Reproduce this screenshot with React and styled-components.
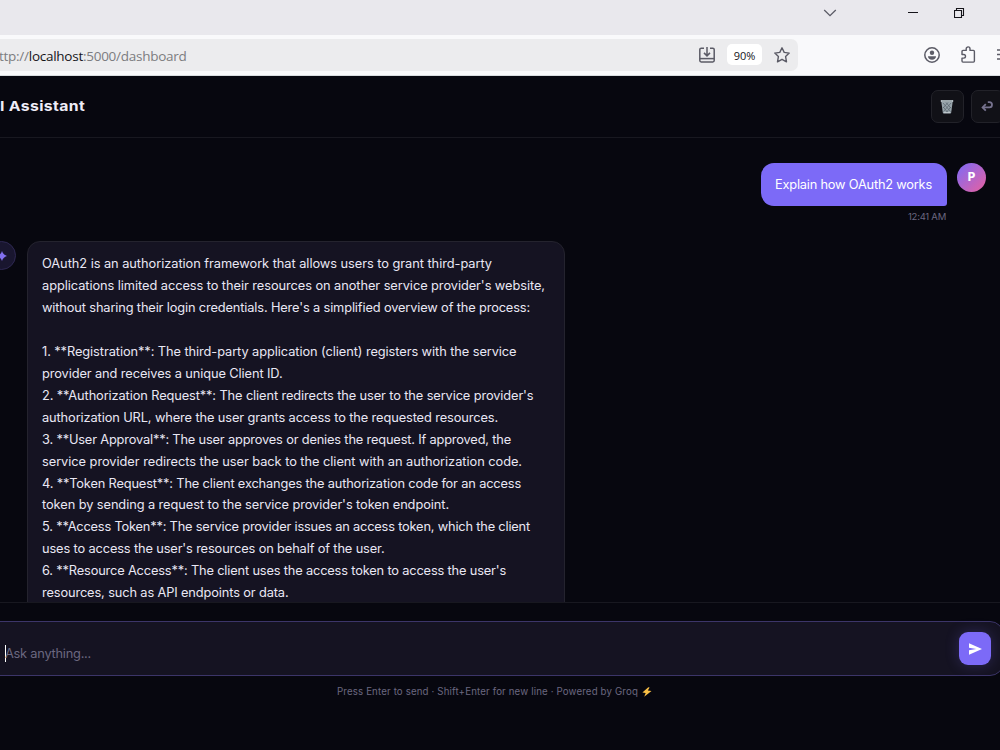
import React, { useLayoutEffect, useRef } from 'react';
import styled, { createGlobalStyle } from 'styled-components';

const FitText = ({ width, children, ...rest }) => {
  const ref = useRef(null);

  // spread the letters so the text takes exactly the wanted width
  useLayoutEffect(() => {
    const el = ref.current;
    el.style.letterSpacing = '0px';
    const natural = el.getBoundingClientRect().width;
    const gap = (width - natural) / el.textContent.length;
    el.style.letterSpacing = `${gap}px`;
  }, [width, children]);

  return (
    <Fitted ref={ref} {...rest}>
      {children}
    </Fitted>
  );
};

const answer = [
  ['OAuth2 is an authorization framework that allows users to grant third-party', 450],
  ["applications limited access to their resources on another service provider's website,", 503],
  ["without sharing their login credentials. Here's a simplified overview of the process:", 488],
  null,
  ['1. **Registration**: The third-party application (client) registers with the service', 474.5],
  ['provider and receives a unique Client ID.', 240.5],
  ["2. **Authorization Request**: The client redirects the user to the service provider's", 491.5],
  ['authorization URL, where the user grants access to the requested resources.', 456],
  ['3. **User Approval**: The user approves or denies the request. If approved, the', 469],
  ['service provider redirects the user back to the client with an authorization code.', 480],
  ['4. **Token Request**: The client exchanges the authorization code for an access', 479],
  ["token by sending a request to the service provider's token endpoint.", 407],
  ['5. **Access Token**: The service provider issues an access token, which the client', 488],
  ["uses to access the user's resources on behalf of the user.", 342.5],
  ["6. **Resource Access**: The client uses the access token to access the user's", 464],
  ['resources, such as API endpoints or data.', 246.5],
];

const ChevronIcon = () => (
  <svg width="14" height="8" viewBox="0 0 14 8" fill="none" stroke="#5b5b66" strokeWidth="1.3">
    <path d="M1.2 1l5.8 5.6L12.8 1" />
  </svg>
);

const MinimizeIcon = () => (
  <svg width="10" height="10" viewBox="0 0 10 10">
    <path d="M0 4.5h10" stroke="#15141a" />
  </svg>
);

const RestoreIcon = () => (
  <svg width="11" height="11" viewBox="0 0 11 11" fill="none" stroke="#15141a" strokeWidth="1.1">
    <path d="M.5 2.500h7v7h-7z" />
    <path d="M2.500 2.500v-2h7v7h-2" />
  </svg>
);

const InstallIcon = () => (
  <svg width="16" height="16" viewBox="0 0 16 16" fill="none" stroke="#5b5b66" strokeWidth="1.5">
    <path d="M5 1.2H2.2C1.5 1.2.8 1.8.8 2.5v11c0 .9.6 1.4 1.4 1.4h11.600c.8 0 1.400-.5 1.400-1.400v-11c0-.7-.7-1.300-1.400-1.300H11" />
    <path d="M.8 11.600h14.400" />
    <path d="M8 0v8.600M5 5.900l3 3 3-3" />
  </svg>
);

const StarIcon = () => (
  <svg width="16" height="16" viewBox="0 0 16 16" fill="none" stroke="#5b5b66" strokeWidth="1.4" strokeLinejoin="round">
    <path d="M8 .8l2.200 4.600 5 .7-3.600 3.500.9 5.200L8 12.300l-4.500 2.500.9-5.200L.8 6.100l5-.7z" />
  </svg>
);

const AccountIcon = () => (
  <svg width="16" height="16" viewBox="0 0 16 16">
    <circle cx="8" cy="8" r="7.2" fill="none" stroke="#5b5b66" strokeWidth="1.5" />
    <circle cx="8" cy="5.7" r="2.2" fill="#5b5b66" />
    <path d="M4 9.300h8c0 2.200-1.700 3.500-4 3.500s-4-1.300-4-3.500z" fill="#5b5b66" />
  </svg>
);

const PuzzleIcon = () => (
  <svg width="15" height="17" viewBox="0 0 15 17" fill="none" stroke="#5b5b66" strokeWidth="1.4" strokeLinejoin="round">
    <path d="M5.200 4.400V2.800a1.900 1.900 0 0 1 3.800 0v1.600h3.400c.6 0 1 .4 1 1v9.700c0 .6-.4 1-1 1H2c-.6 0-1-.4-1-1v-3h1.700a1.800 1.800 0 0 0 0-3.600H1V5.400c0-.6.4-1 1-1z" />
  </svg>
);

const MenuIcon = () => (
  <svg width="14" height="12" viewBox="0 0 14 12" stroke="#5b5b66" strokeWidth="1.3">
    <path d="M0 1h14M0 5.500h14M0 10h14" />
  </svg>
);

const TrashIcon = () => (
  <svg width="14" height="15" viewBox="0 0 14 15">
    <path d="M1.300 2.500h11.400l-1.500 11c-.1.700-.6 1-1.200 1H4c-.6 0-1.100-.3-1.200-1z" fill="#98a4ab" />
    <path d="M3 4l7.500 8.500M6 3.500l5 5.800M3.300 8l4.700 6M11 4l-7.500 8.500M8 3.500L3 9M10.700 8L6 14" stroke="#56626b" strokeWidth=".7" />
    <path d="M3.800 13.600h6.400" stroke="#c3ccd0" strokeWidth="1" />
    <rect x=".6" y=".9" width="12.8" height="2.1" rx="1" fill="#b9c3c8" />
    <path d="M2 2h10" stroke="#5d686f" strokeWidth=".6" />
  </svg>
);

const ReturnIcon = () => (
  <svg width="12" height="11" viewBox="0 0 12 11" fill="none" stroke="#77738f" strokeWidth="1.8">
    <path d="M6.800 1.200h1.600a2.600 2.600 0 0 1 0 5.200H1.800" />
    <path d="M4.800 3.200L1.600 6.400l3.200 3.200" />
  </svg>
);

const SparkIcon = () => (
  <svg width="10" height="10" viewBox="0 0 10 10" fill="#8270ee">
    <path d="M5 0c.8 2.600 2.200 4 5 5-2.800 1-4.200 2.400-5 5-.8-2.600-2.200-4-5-5 2.800-1 4.200-2.400 5-5z" />
  </svg>
);

const SendIcon = () => (
  <svg width="13" height="12" viewBox="0 0 13 12" fill="#fff">
    <path d="M0 .3L13 6 0 11.700V7.300L7.300 6 0 4.700z" />
  </svg>
);

const BoltIcon = () => (
  <svg width="10" height="10" viewBox="0 0 10 10">
    <path d="M6.300.2L.4 5.500l3.300.6L2.200 9.800l7.300-5.700-3.700-.6L7.600.4z" fill="#f9bf45" />
  </svg>
);

export default function App() {
  return (
    <Page>
      <GlobalStyle />
      <TabStrip>
        <ChevronIcon />
        <WindowButtons>
          <MinimizeIcon />
          <RestoreIcon />
        </WindowButtons>
      </TabStrip>
      <Toolbar>
        <AddressBar>
          <Url width={187.5}>
            ttp://<b>localhost</b>:5000/dashboard
          </Url>
          <AddressActions>
            <InstallIcon />
            <Zoom>
              <FitText width={21.5}>90%</FitText>
            </Zoom>
            <StarIcon />
          </AddressActions>
        </AddressBar>
        <BrowserActions>
          <AccountIcon />
          <PuzzleIcon />
          <MenuIcon />
        </BrowserActions>
      </Toolbar>
      <Header>
        <Title width={84.5}>I Assistant</Title>
        <HeaderActions>
          <IconButton>
            <TrashIcon />
          </IconButton>
          <IconButton>
            <ReturnIcon />
          </IconButton>
        </HeaderActions>
      </Header>
      <Chat>
        <UserRow>
          <UserMessage>
            <UserBubble>
              <FitText width={157}>Explain how OAuth2 works</FitText>
            </UserBubble>
            <Time>
              <FitText width={38}>12:41 AM</FitText>
            </Time>
          </UserMessage>
          <UserAvatar>P</UserAvatar>
        </UserRow>
        <BotRow>
          <BotAvatar>
            <SparkIcon />
          </BotAvatar>
          <BotBubble>
            {answer.map((line, i) => (
              <Line key={i}>{line && <FitText width={line[1]}>{line[0]}</FitText>}</Line>
            ))}
          </BotBubble>
        </BotRow>
      </Chat>
      <Composer>
        <InputBox>
          <Placeholder>
            <Caret />
            <FitText width={86}>Ask anything...</FitText>
          </Placeholder>
          <SendButton>
            <SendIcon />
          </SendButton>
        </InputBox>
        <Hint>
          <FitText width={301}>
            Press Enter to send · Shift+Enter for new line · Powered by Groq
          </FitText>
          <BoltIcon />
        </Hint>
      </Composer>
    </Page>
  );
}

const GlobalStyle = createGlobalStyle`
  * {
    box-sizing: border-box;
  }
  body {
    margin: 0;
    overflow: hidden;
    background: #07070f;
  }
  svg {
    display: block;
    flex: none;
  }
`;

const Fitted = styled.span`
  display: inline-block;
  white-space: nowrap;
`;

const Page = styled.div`
  display: flex;
  flex-direction: column;
  width: 1000px;
  height: 750px;
  overflow: hidden;
  background: #07070f;
  color: #e9e7f4;
  font-family: Inter, 'Liberation Sans', sans-serif;
`;

const TabStrip = styled.div`
  display: flex;
  flex: none;
  align-items: center;
  justify-content: flex-end;
  gap: 71px;
  height: 35px;
  padding: 0 35px 9px 0;
  background: #e9e8ed;
`;

const WindowButtons = styled.div`
  display: flex;
  gap: 36px;
`;

const Toolbar = styled.div`
  display: flex;
  flex: none;
  align-items: center;
  justify-content: space-between;
  height: 41px;
  padding-bottom: 1px;
  background: #f9f9fb;
  border-bottom: 1px solid #d9dde0;
`;

const AddressBar = styled.div`
  display: flex;
  align-items: center;
  justify-content: space-between;
  width: 798px;
  height: 32px;
  padding-right: 8px;
  border-radius: 0 7px 7px 0;
  background: #ececee;
`;

const Url = styled(FitText)`
  margin: 2px 0 0 -1px;
  color: #7c7c80;
  font-family: 'Open Sans', sans-serif;
  font-size: 13.5px;
  b {
    color: #15141a;
    font-weight: 400;
  }
`;

const AddressActions = styled.div`
  display: flex;
  align-items: center;
  gap: 12px;
`;

const Zoom = styled.div`
  display: flex;
  align-items: center;
  justify-content: center;
  width: 35px;
  height: 21px;
  padding-top: 1px;
  border-radius: 5px;
  background: #fff;
  color: #15141a;
  font-family: 'Open Sans', sans-serif;
  font-size: 11px;
`;

const BrowserActions = styled.div`
  display: flex;
  align-items: center;
  gap: 21px;
  margin-right: -11px;
`;

const Header = styled.div`
  display: flex;
  flex: none;
  align-items: center;
  justify-content: space-between;
  height: 62px;
  border-bottom: 1px solid #181820;
`;

const Title = styled(FitText)`
  margin-bottom: 1px;
  color: #efedf8;
  font-size: 13.6px;
  font-weight: 700;
  transform: scaleX(1.16);
  transform-origin: left;
`;

const HeaderActions = styled.div`
  display: flex;
  gap: 7px;
  margin-right: -4px;
`;

const IconButton = styled.div`
  display: flex;
  align-items: center;
  justify-content: center;
  width: 33px;
  height: 33px;
  padding-right: 1px;
  border: 1px solid #222229;
  border-radius: 7px;
  background: #111117;
`;

const Chat = styled.div`
  display: flex;
  flex: none;
  flex-direction: column;
  gap: 18px;
  height: 464px;
  padding: 25px 14px 0 0;
  overflow: hidden;
`;

const UserRow = styled.div`
  display: flex;
  flex: none;
  justify-content: flex-end;
  gap: 10px;
  height: 60px;
`;

const UserMessage = styled.div`
  display: flex;
  flex-direction: column;
  align-items: flex-end;
`;

const UserBubble = styled.div`
  display: flex;
  align-items: center;
  width: 186px;
  height: 43px;
  padding-left: 14px;
  border-radius: 13px 13px 3px 13px;
  background: #7c6af7;
  color: #fff;
  font-size: 12.8px;
`;

const Time = styled.div`
  margin: 5px 1px 0 0;
  color: #6b6880;
  font-size: 9.5px;
  line-height: 12px;
`;

const UserAvatar = styled.div`
  width: 29px;
  height: 29px;
  border-radius: 50%;
  background: linear-gradient(135deg, #7c6af7, #e8609f);
  color: #fff;
  font-size: 11.5px;
  font-weight: 800;
  line-height: 28px;
  text-align: center;
`;

const BotRow = styled.div`
  display: flex;
  flex: none;
  gap: 11px;
  margin-left: -13px;
`;

const BotAvatar = styled.div`
  display: flex;
  flex: none;
  align-items: center;
  justify-content: center;
  width: 29px;
  height: 29px;
  border: 1px solid #2e2852;
  border-radius: 50%;
  background: #19162f;
`;

const BotBubble = styled.div`
  width: 538px;
  padding: 11.3px 14px;
  border: 1px solid #24232e;
  border-radius: 13px 13px 13px 3px;
  background: #151322;
`;

const Line = styled.div`
  height: 21.93px;
  font-size: 12.8px;
  line-height: 21.93px;
`;

const Composer = styled.div`
  flex: 1;
  padding-top: 18px;
  border-top: 1px solid #181820;
`;

const InputBox = styled.div`
  display: flex;
  align-items: center;
  justify-content: space-between;
  height: 55px;
  margin: 0 -4px 0 -15px;
  padding: 0 12px 0 19px;
  border: 1px solid #3c3569;
  border-radius: 14px;
  background: #151322;
`;

const Placeholder = styled.div`
  display: flex;
  align-items: center;
  margin-top: 9px;
  color: #6b6880;
  font-size: 12.8px;
`;

const Caret = styled.span`
  width: 1px;
  height: 17px;
  margin-right: -1px;
  background: #fff;
`;

const SendButton = styled.div`
  display: flex;
  align-items: center;
  justify-content: center;
  width: 32px;
  height: 33px;
  border-radius: 9px;
  background: #7c6af7;
  box-shadow: 0 0 14px rgba(124, 106, 247, 0.25);
`;

const Hint = styled.div`
  display: flex;
  align-items: center;
  gap: 4px;
  margin-top: 8.5px;
  padding-left: 337px;
  color: #6b6880;
  font-size: 9.7px;
  line-height: 14px;
`;
